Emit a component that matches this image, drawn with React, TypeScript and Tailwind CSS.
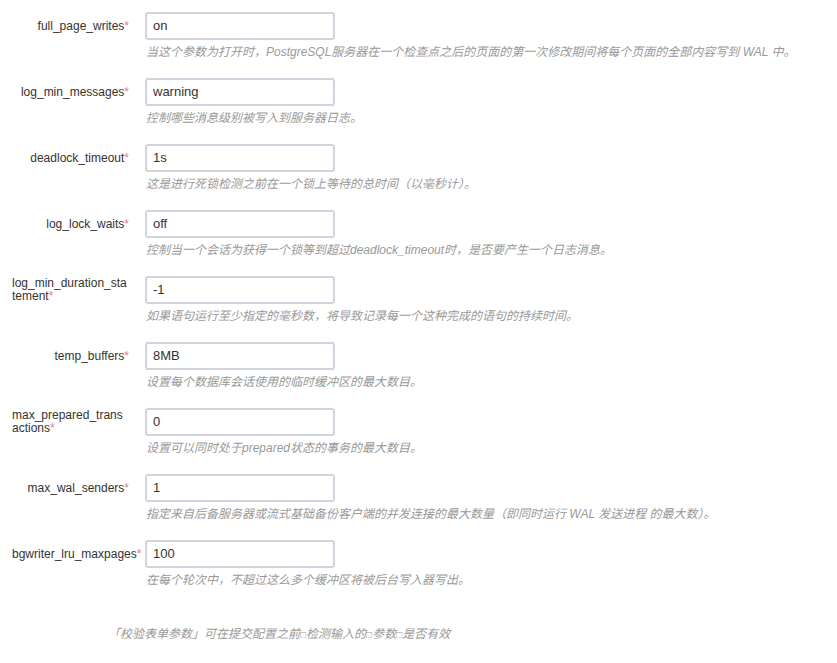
import React from "react";

type Row = {
  label: React.ReactNode;
  value: string;
  help: string;
  wide?: boolean;
};

const rows: Row[] = [
  {
    label: "full_page_writes",
    value: "on",
    help: "当这个参数为打开时，PostgreSQL服务器在一个检查点之后的页面的第一次修改期间将每个页面的全部内容写到 WAL 中。",
  },
  { label: "log_min_messages", value: "warning", help: "控制哪些消息级别被写入到服务器日志。" },
  { label: "deadlock_timeout", value: "1s", help: "这是进行死锁检测之前在一个锁上等待的总时间（以毫秒计）。" },
  {
    label: "log_lock_waits",
    value: "off",
    help: "控制当一个会话为获得一个锁等到超过deadlock_timeout时，是否要产生一个日志消息。",
  },
  {
    label: (
      <>
        log_min_duration_sta
        <br />
        tement
      </>
    ),
    value: "-1",
    help: "如果语句运行至少指定的毫秒数，将导致记录每一个这种完成的语句的持续时间。",
    wide: true,
  },
  { label: "temp_buffers", value: "8MB", help: "设置每个数据库会话使用的临时缓冲区的最大数目。" },
  {
    label: (
      <>
        max_prepared_trans
        <br />
        actions
      </>
    ),
    value: "0",
    help: "设置可以同时处于prepared状态的事务的最大数目。",
    wide: true,
  },
  {
    label: "max_wal_senders",
    value: "1",
    help: "指定来自后备服务器或流式基础备份客户端的并发连接的最大数量（即同时运行 WAL 发送进程 的最大数）。",
  },
  {
    label: "bgwriter_lru_maxpages",
    value: "100",
    help: "在每个轮次中，不超过这么多个缓冲区将被后台写入器写出。",
    wide: true,
  },
];

const cjk = { fontFamily: '"Liberation Sans", "Noto Sans CJK SC", sans-serif' };

export default function App() {
  return (
    <div className="min-h-[663px] w-[837px] bg-white" style={cjk}>
      <div className="pl-[12px] pt-[12px]">
        {rows.map((r, i) => (
          <div key={i} className="flex mb-[17px]">
            <div
              className={
                "w-[133px] shrink-0 h-[28px] flex items-center " +
                (r.wide ? "justify-start" : "justify-end pr-[16px]")
              }
            >
              <span className="text-[12px] leading-[13px] text-[#333] whitespace-nowrap">
                {r.label}
                <span className="text-[#e879a0]">*</span>
              </span>
            </div>
            <div className="flex flex-col">
              <div className="w-[190px] h-[28px] border-2 border-[#d4d2de] rounded-[3px] flex items-center pl-[6px] text-[13px] text-[#333]">
                {r.value}
              </div>
              <div className="mt-[3px] h-[18px] leading-[18px] text-[12px] italic text-[#999] whitespace-nowrap pl-[1px]">
                {r.help}
              </div>
            </div>
          </div>
        ))}
      </div>
      <div className="pl-[108px] mt-[36px] text-[12px] italic text-[#999] leading-[18px]">
        「校验表单参数」可在提交配置之前<span className="text-[10px]">□</span>检测输入的
        <span className="text-[10px]">□</span>参数<span className="text-[10px]">□</span>是否有效
      </div>
    </div>
  );
}
